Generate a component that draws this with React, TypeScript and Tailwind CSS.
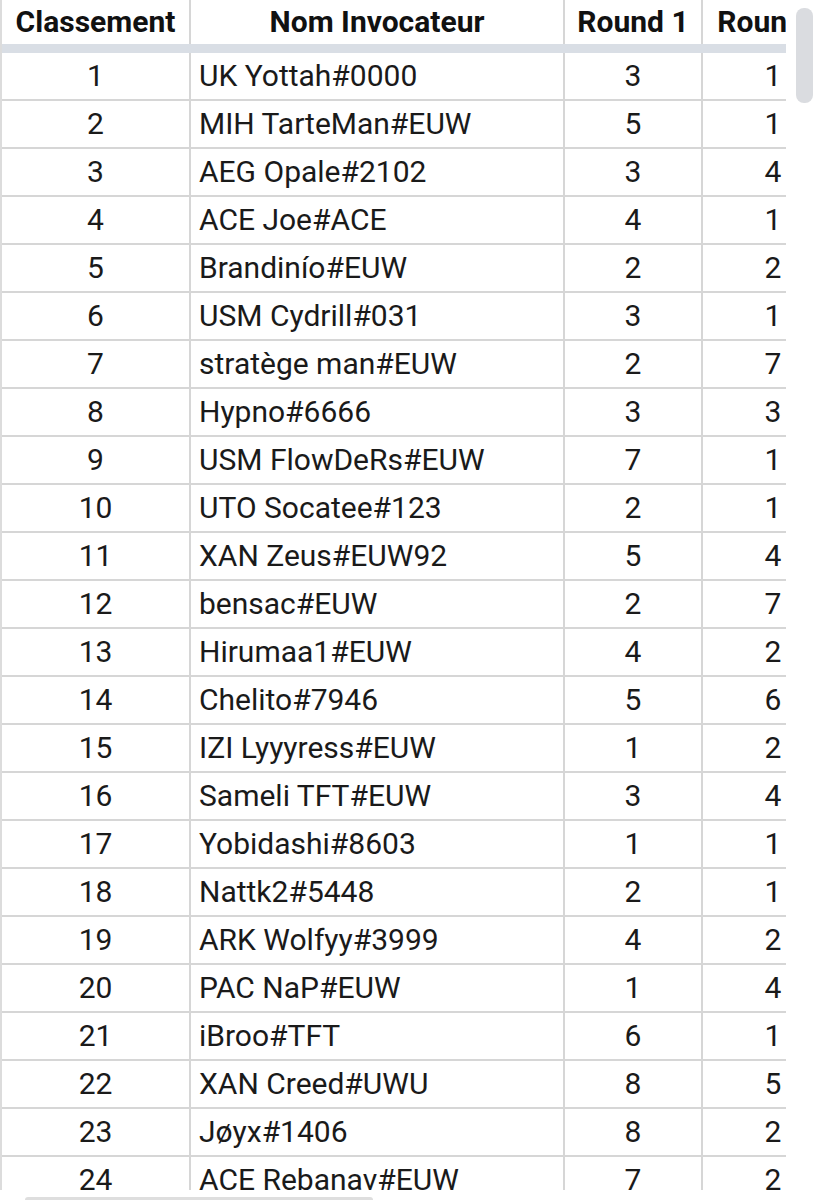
import React from "react";

const rows: [number, string, number, number][] = [
  [1, "UK Yottah#0000", 3, 1],
  [2, "MIH TarteMan#EUW", 5, 1],
  [3, "AEG Opale#2102", 3, 4],
  [4, "ACE Joe#ACE", 4, 1],
  [5, "Brandinío#EUW", 2, 2],
  [6, "USM Cydrill#031", 3, 1],
  [7, "stratège man#EUW", 2, 7],
  [8, "Hypno#6666", 3, 3],
  [9, "USM FlowDeRs#EUW", 7, 1],
  [10, "UTO Socatee#123", 2, 1],
  [11, "XAN Zeus#EUW92", 5, 4],
  [12, "bensac#EUW", 2, 7],
  [13, "Hirumaa1#EUW", 4, 2],
  [14, "Chelito#7946", 5, 6],
  [15, "IZI Lyyyress#EUW", 1, 2],
  [16, "Sameli TFT#EUW", 3, 4],
  [17, "Yobidashi#8603", 1, 1],
  [18, "Nattk2#5448", 2, 1],
  [19, "ARK Wolfyy#3999", 4, 2],
  [20, "PAC NaP#EUW", 1, 4],
  [21, "iBroo#TFT", 6, 1],
  [22, "XAN Creed#UWU", 8, 5],
  [23, "Jøyx#1406", 8, 2],
  [24, "ACE Rebanav#EUW", 7, 2],
];

export default function App() {
  return (
    <div
      className="flex w-[823px] h-[1200px] bg-white overflow-hidden text-[#1a1a1a]"
      style={{ fontFamily: "Roboto, 'Liberation Sans', sans-serif" }}
    >
      <div className="flex flex-col w-[786px] shrink-0">
        <div className="h-[1190px] overflow-hidden">
          <div className="w-[845px] border-l-2 border-[#dcdcdc]">
            <div className="flex h-[44px] font-bold text-[30px] leading-none text-[#111]">
              <div className="w-[189px] shrink-0 border-r-2 border-[#d6d6d6] flex items-center justify-center">
                Classement
              </div>
              <div className="w-[374px] shrink-0 border-r-2 border-[#d6d6d6] flex items-center justify-center">
                Nom Invocateur
              </div>
              <div className="w-[138px] shrink-0 border-r-2 border-[#d6d6d6] flex items-center justify-center">
                Round 1
              </div>
              <div className="w-[140px] shrink-0 flex items-center justify-center whitespace-nowrap">
                Round 2
              </div>
            </div>
            <div className="h-[9px] bg-[#d9dee5]" />
            {rows.map(([rank, name, r1, r2]) => (
              <div
                key={rank}
                className="flex h-[48px] border-b-2 border-[#d6d6d6] text-[30px] leading-none"
              >
                <div className="w-[189px] shrink-0 border-r-2 border-[#d6d6d6] flex items-center justify-center">
                  {rank}
                </div>
                <div className="w-[374px] shrink-0 border-r-2 border-[#d6d6d6] flex items-center pl-[8px] whitespace-nowrap">
                  {name}
                </div>
                <div className="w-[138px] shrink-0 border-r-2 border-[#d6d6d6] flex items-center justify-center">
                  {r1}
                </div>
                <div className="w-[140px] shrink-0 flex items-center justify-center">
                  {r2}
                </div>
              </div>
            ))}
          </div>
        </div>
        <div className="h-[10px] flex items-end">
          <div className="ml-[25px] w-[348px] h-[3px] bg-[#dedede] rounded-t-sm" />
        </div>
      </div>
      <div className="flex-1 pt-[8px] pl-[10px]">
        <div className="w-[17px] h-[95px] rounded-[8px] bg-[#dadce0]" />
      </div>
    </div>
  );
}
